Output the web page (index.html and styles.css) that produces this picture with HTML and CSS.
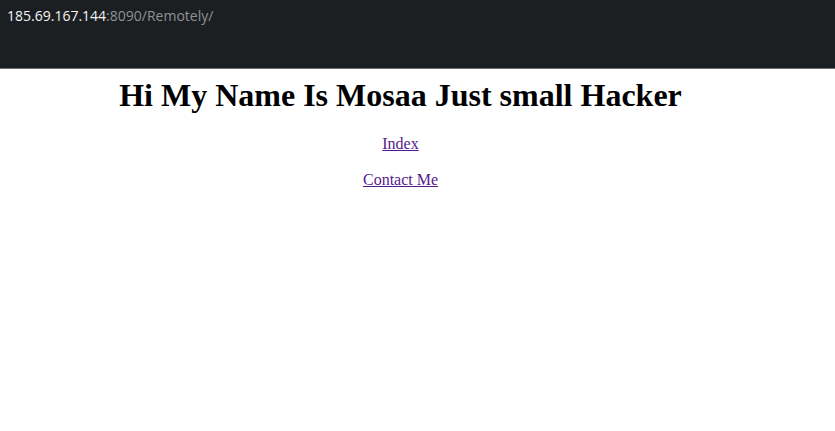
FILE: index.html
```html
<!DOCTYPE html>
<html>
<head>
<meta charset="utf-8">
<link rel="stylesheet" href="styles.css">
</head>
<body>
<div class="bar"><span class="host">185.69.167.144</span><span class="path">:8090/Remotely/</span></div>
<main class="page">
  <h1 class="title">Hi My Name Is Mosaa Just small Hacker</h1>
  <nav class="links">
    <a href="#" class="link">Index</a>
    <a href="#" class="link">Contact Me</a>
  </nav>
</main>
</body>
</html>
```
FILE: styles.css
```css
html, body { margin: 0; padding: 0; background: #fff; }
body { font-family: "Liberation Serif", serif; }
.bar {
  background: #1c1f22;
  border-bottom: 1px solid #6b6e70;
  padding: 6px 0 0 7px;
  box-sizing: border-box;
  height: 69px;
  font-family: "Open Sans", sans-serif;
  font-size: 14px;
  line-height: 20px;
}
.host { color: #f2f3f4; }
.path { color: #8e9194; }
.page {
  width: 785px;
  margin-left: 8px;
  text-align: center;
  display: flex;
  flex-direction: column;
  align-items: center;
}
.title {
  font-size: 32px;
  font-weight: bold;
  margin: 8px 0 0;
  line-height: 37px;
}
.links {
  display: flex;
  flex-direction: column;
  align-items: center;
  gap: 18px;
  margin-top: 21px;
  font-size: 16px;
  line-height: 18px;
}
.link { color: #551a8b; }
```
